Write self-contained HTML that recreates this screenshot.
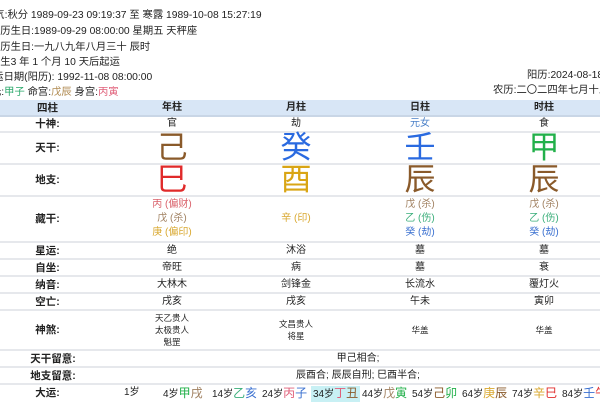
<!DOCTYPE html>
<html><head><meta charset="utf-8"><style>
*{margin:0;padding:0;box-sizing:border-box}
body{width:600px;height:400px;overflow:hidden;background:#fff;font-family:"Liberation Sans","Noto Sans CJK SC",sans-serif;color:#222;position:relative}
.t{position:absolute;font-size:10.3px;white-space:nowrap;line-height:13px}
.r{position:absolute;left:0;width:600px;border-bottom:2px solid #e6e8ec}
.c{position:absolute;text-align:center;white-space:nowrap;font-size:10px;line-height:12px;display:flex;flex-direction:column;justify-content:center;align-items:center;height:100%;top:0}
.l{left:0;width:95px;font-weight:bold;font-size:10.5px}
.a{left:110px;width:124px}.b{left:234px;width:124px}.d{left:358px;width:124px}.e{left:482px;width:124px}
.big{font-size:31px;line-height:32px}
.dy{position:absolute;top:386px;font-size:10px;line-height:14px;white-space:nowrap}
.dy span{font-size:12px}
</style></head><body>
<div class="t" style="left:-16px;top:9px">节气:秋分 1989-09-23 09:19:37 至 寒露 1989-10-08 15:27:19</div>
<div class="t" style="left:-10px;top:25px">阳历生日:1989-09-29 08:00:00 星期五 天秤座</div>
<div class="t" style="left:-10px;top:41px">农历生日:一九八九年八月三十 辰时</div>
<div class="t" style="left:-10px;top:56px">出生3 年 1 个月 10 天后起运</div>
<div class="t" style="left:-17px;top:71px">起运日期(阳历): 1992-11-08 08:00:00</div>
<div class="t" style="left:-9px;top:86px">元:<span style="color:#2aa86a">甲子</span> 命宫:<span style="color:#b08a50">戊辰</span> 身宫:<span style="color:#e0607a">丙寅</span></div>
<div class="t" style="left:527px;top:69px">阳历:2024-08-18</div>
<div class="t" style="left:493px;top:84px">农历:二〇二四年七月十五</div>

<div class="r" style="top:100px;height:17px;background:#d8e6f6;border-bottom:2px solid #c9d6e6"><div class="c l">四柱</div><div class="c a" style="font-weight:bold">年柱</div><div class="c b" style="font-weight:bold">月柱</div><div class="c d" style="font-weight:bold">日柱</div><div class="c e" style="font-weight:bold">时柱</div></div>
<div class="r" style="top:117px;height:16px"><div class="c l">十神:</div><div class="c a">官</div><div class="c b">劫</div><div class="c d" style="color:#4a80c8">元女</div><div class="c e">食</div></div>
<div class="r" style="top:133px;height:32px"><div class="c l">天干:</div><div class="c a big" style="color:#8a5a2a">己</div><div class="c b big" style="color:#2a6ae0">癸</div><div class="c d big" style="color:#2a6ae0">壬</div><div class="c e big" style="color:#22b04a">甲</div></div>
<div class="r" style="top:165px;height:32px"><div class="c l">地支:</div><div class="c a big" style="color:#e02a2a">巳</div><div class="c b big" style="color:#d9a514">酉</div><div class="c d big" style="color:#8a5a2a">辰</div><div class="c e big" style="color:#8a5a2a">辰</div></div>
<div class="r" style="top:197px;height:46px"><div class="c l">藏干:</div>
<div class="c a" style="line-height:14px"><div style="color:#d9606a">丙 (偏财)</div><div style="color:#a08060">戊 (杀)</div><div style="color:#d9a830">庚 (偏印)</div></div>
<div class="c b" style="color:#d9a830">辛 (印)</div>
<div class="c d" style="line-height:14px"><div style="color:#a08060">戊 (杀)</div><div style="color:#3aae7a">乙 (伤)</div><div style="color:#3a70d0">癸 (劫)</div></div>
<div class="c e" style="line-height:14px"><div style="color:#a08060">戊 (杀)</div><div style="color:#3aae7a">乙 (伤)</div><div style="color:#3a70d0">癸 (劫)</div></div></div>
<div class="r" style="top:243px;height:17px"><div class="c l">星运:</div><div class="c a">绝</div><div class="c b">沐浴</div><div class="c d">墓</div><div class="c e">墓</div></div>
<div class="r" style="top:260px;height:17px"><div class="c l">自坐:</div><div class="c a">帝旺</div><div class="c b">病</div><div class="c d">墓</div><div class="c e">衰</div></div>
<div class="r" style="top:277px;height:17px"><div class="c l">纳音:</div><div class="c a">大林木</div><div class="c b">剑锋金</div><div class="c d">长流水</div><div class="c e">覆灯火</div></div>
<div class="r" style="top:294px;height:17px"><div class="c l">空亡:</div><div class="c a">戌亥</div><div class="c b">戌亥</div><div class="c d">午未</div><div class="c e">寅卯</div></div>
<div class="r" style="top:311px;height:40px"><div class="c l">神煞:</div><div class="c a" style="font-size:8.5px"><div>天乙贵人</div><div>太极贵人</div><div>魁罡</div></div><div class="c b" style="font-size:8.5px"><div>文昌贵人</div><div>将星</div></div><div class="c d" style="font-size:8.5px">华盖</div><div class="c e" style="font-size:8.5px">华盖</div></div>
<div class="r" style="top:351px;height:17px"><div class="c l" style="left:-10px;width:126px">天干留意:</div><div class="c" style="left:110px;width:496px">甲己相合;</div></div>
<div class="r" style="top:368px;height:17px"><div class="c l" style="left:-10px;width:126px">地支留意:</div><div class="c" style="left:110px;width:496px">辰酉合; 辰辰自刑; 巳酉半合;</div></div>
<div class="c l" style="position:absolute;top:386px;height:14px">大运:</div>
<div class="dy" style="left:124px">1岁</div>
<div class="dy" style="left:163px">4岁<span style="color:#22b04a">甲</span><span style="color:#a08060">戌</span></div>
<div class="dy" style="left:212px">14岁<span style="color:#3aae7a">乙</span><span style="color:#3a70d0">亥</span></div>
<div class="dy" style="left:262px">24岁<span style="color:#e0607a">丙</span><span style="color:#3a70d0">子</span></div>
<div class="dy" style="left:311px;background:#c8f0f4;padding:0 2px">34岁<span style="color:#e0607a">丁</span><span style="color:#8a5a2a">丑</span></div>
<div class="dy" style="left:362px">44岁<span style="color:#a08060">戊</span><span style="color:#22b04a">寅</span></div>
<div class="dy" style="left:412px">54岁<span style="color:#8a5a2a">己</span><span style="color:#22b04a">卯</span></div>
<div class="dy" style="left:462px">64岁<span style="color:#d9a830">庚</span><span style="color:#8a5a2a">辰</span></div>
<div class="dy" style="left:512px">74岁<span style="color:#d9a830">辛</span><span style="color:#e02a2a">巳</span></div>
<div class="dy" style="left:562px">84岁<span style="color:#3a70d0">壬</span><span style="color:#e02a2a">午</span></div>
</body></html>
